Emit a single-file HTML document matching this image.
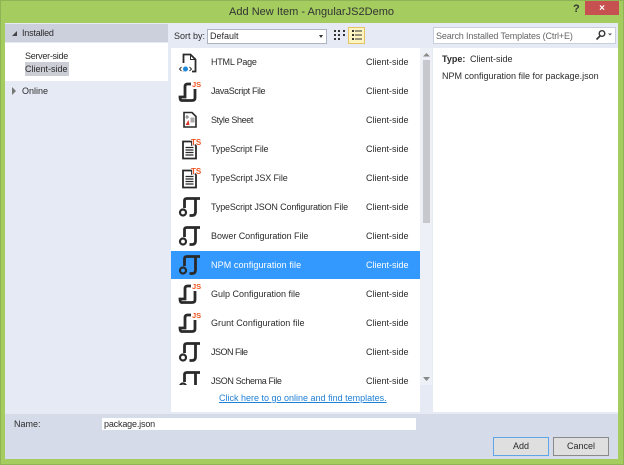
<!DOCTYPE html>
<html><head><meta charset="utf-8"><style>
html,body{margin:0;padding:0}
body{width:624px;height:465px;overflow:hidden;background:#a4cc5e;font-family:"Liberation Sans",sans-serif;font-size:9px;color:#2b2b2b;position:relative}
#r{position:absolute;left:0;top:0;width:624px;height:465px;filter:blur(.3px)}
.a{position:absolute;white-space:nowrap}
.b{position:absolute}
.n{left:211px}.c{left:366px}
svg{position:absolute;overflow:visible}
</style></head><body><div id="r">
<div class="b" style="left:0;top:0;width:622px;height:463px;border:1px solid #8fb456"></div>
<div class="a" style="left:229px;top:4px;font-size:11px;letter-spacing:.02px;color:#333;line-height:16px">Add New Item - AngularJS2Demo</div>
<div class="a" style="left:573px;top:2px;font-size:11px;font-weight:bold;color:#333;line-height:14px">?</div>
<div class="b" style="left:585px;top:1px;width:34px;height:14px;background:#c75050"></div>
<div class="a" style="left:585px;top:1px;width:34px;text-align:center;color:#fff;font-size:10px;font-weight:bold;line-height:15px">×</div>
<div class="b" style="left:5px;top:23px;width:613px;height:436px;background:#e6eaf5"></div>
<div class="b" style="left:5px;top:24px;width:163px;height:18px;background:#ccd0dd"></div>
<div class="b" style="left:5px;top:43px;width:163px;height:38px;background:#fff"></div>
<div class="b" style="left:12px;top:31px;width:0;height:0;border-left:5px solid transparent;border-bottom:5px solid #444"></div>
<div class="a" style="left:22px;top:27px;line-height:12px;letter-spacing:-.2px">Installed</div>
<div class="a" style="left:25px;top:50px;line-height:12px;letter-spacing:-.28px">Server-side</div>
<div class="b" style="left:25px;top:62px;width:44px;height:14px;background:#ccced6"></div>
<div class="a" style="left:25px;top:63px;line-height:12px">Client-side</div>
<div class="b" style="left:12px;top:87px;width:0;height:0;border-left:4px solid #777;border-top:4px solid transparent;border-bottom:4px solid transparent"></div>
<div class="a" style="left:22px;top:85px;line-height:12px">Online</div>
<div class="a" style="left:174px;top:30px;line-height:12px">Sort by:</div>
<div class="b" style="left:207px;top:29px;width:118px;height:13px;background:#fff;border:1px solid #aeb3c2"></div>
<div class="a" style="left:210px;top:30px;line-height:12px">Default</div>
<div class="b" style="left:319px;top:35px;width:0;height:0;border-left:2.5px solid transparent;border-right:2.5px solid transparent;border-top:3px solid #333"></div>
<svg style="left:333px;top:29px" width="14" height="14"><g fill="#333"><rect x="1" y="1" width="2" height="2"/><rect x="5" y="1" width="2" height="2"/><rect x="10" y="1" width="2" height="2"/><rect x="1" y="5" width="2" height="2"/><rect x="5" y="5" width="2" height="2"/><rect x="10" y="5" width="2" height="2"/><rect x="1" y="9" width="2" height="2"/><rect x="5" y="9" width="2" height="2"/></g></svg>
<div class="b" style="left:348px;top:27px;width:15px;height:15px;background:#fdf4bf;border:1px solid #e5c365"></div>
<svg style="left:350px;top:28px" width="14" height="15"><g fill="#333"><rect x="2" y="2" width="2" height="2"/><rect x="2" y="6" width="2" height="2"/><rect x="2" y="10" width="2" height="2"/><rect x="5" y="2.500" width="7" height="1"/><rect x="5" y="6.500" width="7" height="1"/><rect x="5" y="10.500" width="7" height="1"/></g></svg>
<div class="b" style="left:433px;top:27px;width:181px;height:15px;background:#fff;border:1px solid #c9cedd"></div>
<div class="a" style="left:436px;top:30px;line-height:12px;color:#666;letter-spacing:-.14px">Search Installed Templates (Ctrl+E)</div>
<svg style="left:594px;top:29px" width="20" height="12"><circle cx="8" cy="4.500" r="2.800" fill="none" stroke="#333" stroke-width="1.400"/><path d="M6 7L2.500 10.500" stroke="#333" stroke-width="1.600"/><path d="M14 4.500h4l-2 2z" fill="#555"/></svg>
<div class="b" style="left:171px;top:48px;width:249px;height:364px;background:#fff;overflow:hidden"></div>
<div class="b" style="left:433px;top:48px;width:185px;height:364px;background:#fff"></div>
<div class="b" style="left:420px;top:48px;width:12px;height:337px;background:#eef0f7"></div>
<div class="b" style="left:423px;top:60px;width:7px;height:163px;background:#c6c8ce"></div>
<svg style="left:420px;top:50px" width="13" height="8"><path d="M3 6.500L6.500 3L10 6.500z" fill="#888"/></svg>
<svg style="left:420px;top:375px" width="13" height="8"><path d="M3 2h7L6.500 6z" fill="#888"/></svg>
<div class="b" style="left:171px;top:251px;width:249px;height:28px;background:#3399ff"></div>
<svg width="0" height="0" style="position:absolute"><defs>
<g id="js"><path d="M16 8V17Q16 19.500 13 19.500H3Q1 19.500 1 16H6V5.500Q6 3 8.500 3H12" fill="none" stroke="#2a2a2a" stroke-width="2.800"/>
<text x="13" y="6" font-family="Liberation Sans" font-weight="bold" font-size="7.500" fill="#f0541e" stroke="#fff" stroke-width="1.500" paint-order="stroke">JS</text></g>
<g id="ts"><path d="M2 2.500H11V6H15V19.500H2z" fill="#fff" stroke="#2a2a2a" stroke-width="1.800"/><path d="M4.500 8.500H12.500M4.500 11H12.500M4.500 13.500H12.500M4.500 16H12.500" stroke="#2a2a2a" stroke-width="1.200"/>
<text x="10" y="6" font-family="Liberation Sans" font-weight="bold" font-size="8" fill="#f0541e" stroke="#fff" stroke-width="1.500" paint-order="stroke">TS</text></g>
<g id="cfg"><path d="M6.500 12V4.500Q6.500 2.500 9 2.500H22" fill="none" stroke="#2a2a2a" stroke-width="2.800"/><path d="M17.500 3V16Q17.500 19.500 14 19.500H11.500" fill="none" stroke="#2a2a2a" stroke-width="2.800"/><circle cx="5" cy="16.500" r="3" fill="none" stroke="#2a2a2a" stroke-width="2.200"/></g>
</defs></svg>
<svg style="left:179px;top:52px" width="22" height="22"><path d="M4.500 11V2.500H11.500L16.500 7.500V19.500H13M4.500 19.800V19.500" fill="none" stroke="#2a2a2a" stroke-width="1.800"/><path d="M11.500 2.500V7.500H16.500" fill="none" stroke="#2a2a2a"/><circle cx="6.500" cy="17" r="2.500" fill="#1e88d8"/><path d="M2.500 15L.5 17L2.500 19M10.500 15L12.500 17L10.500 19" fill="none" stroke="#333"/></svg>
<svg style="left:179px;top:81px" width="24" height="22"><use href="#js"/></svg>
<svg style="left:182px;top:111px" width="18" height="20"><path d="M2 1.500H10L14 5.500V16H2z" fill="#fff" stroke="#2a2a2a" stroke-width="1.600"/><rect x="8.500" y="6.500" width="4" height="5" fill="#aaa"/><path d="M5 4V8M3.500 6H7" stroke="#777"/><path d="M3.500 14L6.500 9L7.500 14z" fill="#d8392b"/></svg>
<svg style="left:181px;top:139px" width="24" height="22"><use href="#ts"/></svg>
<svg style="left:181px;top:168px" width="24" height="22"><use href="#ts"/></svg>
<svg style="left:178px;top:196px" width="24" height="22"><use href="#cfg"/></svg>
<svg style="left:178px;top:225px" width="24" height="22"><use href="#cfg"/></svg>
<svg style="left:178px;top:254px" width="24" height="22"><use href="#cfg"/></svg>
<svg style="left:179px;top:283px" width="24" height="22"><use href="#js"/></svg>
<svg style="left:179px;top:312px" width="24" height="22"><use href="#js"/></svg>
<svg style="left:178px;top:341px" width="24" height="22"><use href="#cfg"/></svg>
<div class="b" style="left:178px;top:370px;width:24px;height:15px;overflow:hidden"><svg style="left:0;top:0" width="24" height="22"><use href="#cfg"/></svg></div>
<div class="a n" style="top:56px;line-height:12px;letter-spacing:-.22px">HTML Page</div><div class="a c" style="top:56px;line-height:12px">Client-side</div>
<div class="a n" style="top:85px;line-height:12px;letter-spacing:-.32px">JavaScript File</div><div class="a c" style="top:85px;line-height:12px">Client-side</div>
<div class="a n" style="top:114px;line-height:12px;letter-spacing:-.36px">Style Sheet</div><div class="a c" style="top:114px;line-height:12px">Client-side</div>
<div class="a n" style="top:143px;line-height:12px;letter-spacing:-.14px">TypeScript File</div><div class="a c" style="top:143px;line-height:12px">Client-side</div>
<div class="a n" style="top:172px;line-height:12px;letter-spacing:-.1px">TypeScript JSX File</div><div class="a c" style="top:172px;line-height:12px">Client-side</div>
<div class="a n" style="top:201px;line-height:12px;letter-spacing:-.15px">TypeScript JSON Configuration File</div><div class="a c" style="top:201px;line-height:12px">Client-side</div>
<div class="a n" style="top:230px;line-height:12px;letter-spacing:-.05px">Bower Configuration File</div><div class="a c" style="top:230px;line-height:12px">Client-side</div>
<div class="a n" style="top:259px;line-height:12px;color:#fff;letter-spacing:.1px">NPM configuration file</div><div class="a c" style="top:259px;line-height:12px;color:#fff">Client-side</div>
<div class="a n" style="top:288px;line-height:12px">Gulp Configuration file</div><div class="a c" style="top:288px;line-height:12px">Client-side</div>
<div class="a n" style="top:317px;line-height:12px;letter-spacing:.04px">Grunt Configuration file</div><div class="a c" style="top:317px;line-height:12px">Client-side</div>
<div class="a n" style="top:346px;line-height:12px;letter-spacing:-.5px">JSON File</div><div class="a c" style="top:346px;line-height:12px">Client-side</div>
<div class="a n" style="top:375px;line-height:12px;letter-spacing:-.38px">JSON Schema File</div><div class="a c" style="top:375px;line-height:12px">Client-side</div>
<div class="b" style="left:171px;top:387px;width:249px;height:25px;background:#fff"></div>
<div class="a" style="left:219px;top:392px;line-height:12px;color:#1e7fd6;text-decoration:underline">Click here to go online and find templates.</div>
<div class="a" style="left:442px;top:53px;line-height:12px"><b>Type:</b></div>
<div class="a" style="left:470px;top:53px;line-height:12px">Client-side</div>
<div class="a" style="left:442px;top:70px;line-height:12px">NPM configuration file for package.json</div>
<div class="b" style="left:5px;top:414px;width:613px;height:45px;background:#d6dbe9"></div>
<div class="a" style="left:14px;top:418px;line-height:12px">Name:</div>
<div class="b" style="left:102px;top:418px;width:314px;height:12px;background:#fff"></div>
<div class="a" style="left:104px;top:418px;line-height:12px;letter-spacing:-.17px">package.json</div>
<div class="b" style="left:493px;top:437px;width:54px;height:17px;background:#dfdfdf;border:1px solid #5fa6e8;text-align:center;line-height:16px">Add</div>
<div class="b" style="left:553px;top:437px;width:54px;height:17px;background:#dfdfdf;border:1px solid #8a8a8a;text-align:center;line-height:16px">Cancel</div>
</div></body></html>
